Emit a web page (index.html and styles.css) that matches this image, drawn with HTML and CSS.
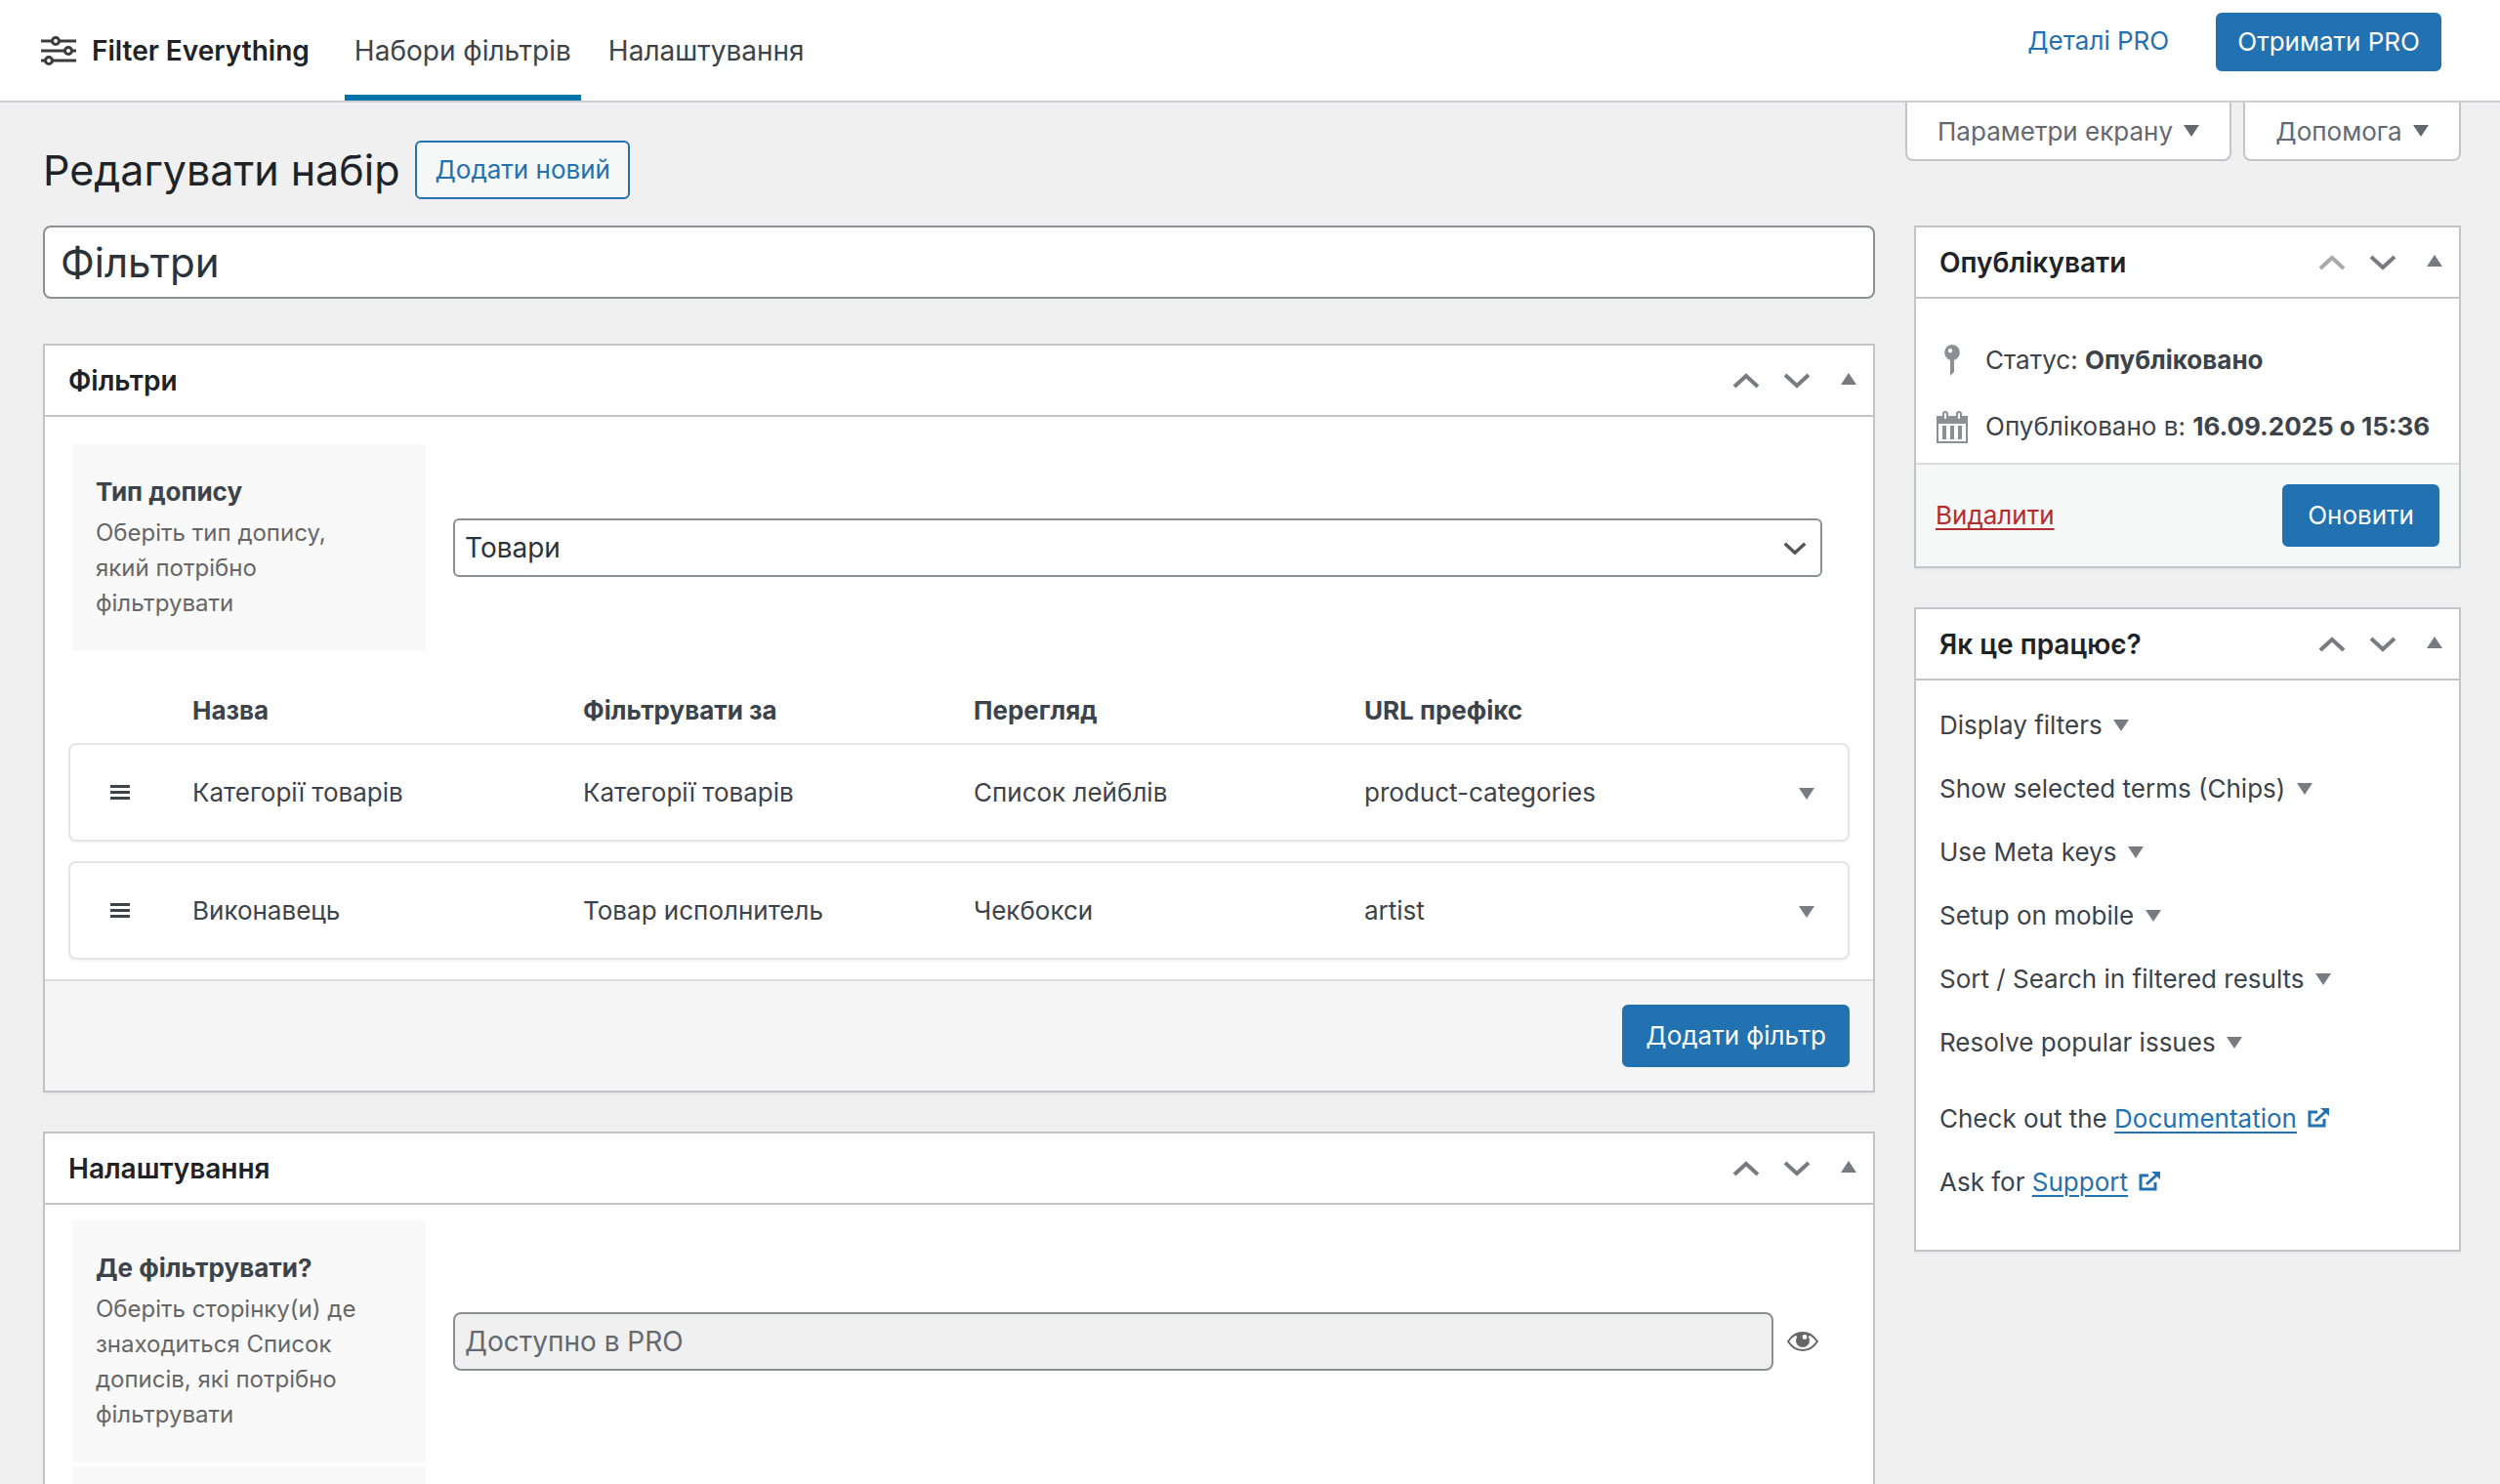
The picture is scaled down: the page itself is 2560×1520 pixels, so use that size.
FILE: index.html
```html
<!DOCTYPE html>
<html lang="uk">
<head>
  <meta charset="UTF-8">
  <title>Редагувати набір</title>
  <link rel="stylesheet" href="styles.css">
</head>
<body>
  <!-- Shared icons -->
  <svg class="sprite" aria-hidden="true">
    <symbol id="icon-up" viewBox="0 0 28 16"><path d="M2 14 L14 3 L26 14" fill="none" stroke="currentColor" stroke-width="4"/></symbol>
    <symbol id="icon-down" viewBox="0 0 28 16"><path d="M2 2 L14 13 L26 2" fill="none" stroke="currentColor" stroke-width="4"/></symbol>
    <symbol id="icon-external" viewBox="0 0 22 20"><path d="M10 4H2V18H17V11M8 13L19 3" fill="none" stroke="currentColor" stroke-width="3"/><path d="M13 0H22V8Z" fill="currentColor"/></symbol>
  </svg>

  <header class="topbar">
    <div class="brand">
      <svg class="brand-icon" viewBox="0 0 36 30" fill="none" stroke="#3c3c3c" stroke-width="3">
        <path d="M0 5H11M19 5H36M0 15H24M32 15H36M0 25H4M12 25H36"/>
        <circle cx="15" cy="5" r="3.5"/><circle cx="28" cy="15" r="3.5"/><circle cx="8" cy="25" r="3.5"/>
      </svg>
      <span>Filter Everything</span>
    </div>
    <nav class="tabs">
      <a href="#" class="tab active">Набори фільтрів</a>
      <a href="#" class="tab">Налаштування</a>
    </nav>
    <div class="pro">
      <a href="#" class="pro-link">Деталі PRO</a>
      <button type="button" class="btn btn-primary">Отримати PRO</button>
    </div>
  </header>

  <div class="page-head">
    <div class="heading">
      <h1>Редагувати набір</h1>
      <button type="button" class="btn btn-outline">Додати новий</button>
    </div>
    <div class="screen-meta">
      <button type="button">Параметри екрану <i class="tri-down"></i></button>
      <button type="button">Допомога <i class="tri-down"></i></button>
    </div>
  </div>

  <div class="columns">
    <main>
      <input type="text" class="title-input" value="Фільтри" aria-label="Назва набору">

      <section class="postbox">
        <div class="postbox-header">
          <h2>Фільтри</h2>
          <div class="handles">
            <button type="button" aria-label="Вгору"><svg><use href="#icon-up"/></svg></button>
            <button type="button" aria-label="Вниз"><svg><use href="#icon-down"/></svg></button>
            <button type="button" class="toggle" aria-label="Згорнути"><i class="tri-up"></i></button>
          </div>
        </div>
        <div class="field field-first">
          <div class="field-label">
            <label for="postType">Тип допису</label>
            <p>Оберіть тип допису, який потрібно фільтрувати</p>
          </div>
          <div class="field-input">
            <div class="select-wrap">
              <select id="postType"><option>Товари</option></select>
              <svg class="select-arrow"><use href="#icon-down"/></svg>
            </div>
          </div>
        </div>
        <table class="filters">
          <thead>
            <tr>
              <th class="col-sort"></th>
              <th>Назва</th>
              <th>Фільтрувати за</th>
              <th>Перегляд</th>
              <th>URL префікс</th>
              <th class="col-toggle"></th>
            </tr>
          </thead>
          <tbody>
            <tr>
              <td><span class="grip"></span></td>
              <td>Категорії товарів</td>
              <td>Категорії товарів</td>
              <td>Список лейблів</td>
              <td>product-categories</td>
              <td><i class="tri-down"></i></td>
            </tr>
            <tr>
              <td><span class="grip"></span></td>
              <td>Виконавець</td>
              <td>Товар исполнитель</td>
              <td>Чекбокси</td>
              <td>artist</td>
              <td><i class="tri-down"></i></td>
            </tr>
          </tbody>
        </table>
        <div class="filters-footer">
          <button type="button" class="btn btn-primary btn-large">Додати фільтр</button>
        </div>
      </section>

      <section class="postbox">
        <div class="postbox-header">
          <h2>Налаштування</h2>
          <div class="handles">
            <button type="button" aria-label="Вгору"><svg><use href="#icon-up"/></svg></button>
            <button type="button" aria-label="Вниз"><svg><use href="#icon-down"/></svg></button>
            <button type="button" class="toggle" aria-label="Згорнути"><i class="tri-up"></i></button>
          </div>
        </div>
        <div class="settings">
          <div class="field">
            <div class="field-label">
              <label for="where">Де фільтрувати?</label>
              <p>Оберіть сторінку(и) де знаходиться Список дописів, які потрібно фільтрувати</p>
            </div>
            <div class="field-input">
              <input type="text" id="where" value="Доступно в PRO" disabled>
              <svg class="eye" viewBox="0 0 32 20">
                <path d="M1 10C5 4 10 1 16 1S27 4 31 10C27 16 22 19 16 19S5 16 1 10Z" fill="none" stroke="#666" stroke-width="2"/>
                <path d="M8 3Q16 -1 24 3L22 5H10Z" fill="#666"/>
                <circle cx="16" cy="9" r="7" fill="#666"/><circle cx="18" cy="5.500" r="2.400" fill="#fff"/>
              </svg>
            </div>
          </div>
          <div class="field">
            <div class="field-label"></div>
          </div>
        </div>
      </section>
    </main>

    <aside>
      <section class="postbox">
        <div class="postbox-header">
          <h2>Опублікувати</h2>
          <div class="handles">
            <button type="button" aria-label="Вгору" disabled><svg><use href="#icon-up"/></svg></button>
            <button type="button" aria-label="Вниз"><svg><use href="#icon-down"/></svg></button>
            <button type="button" class="toggle" aria-label="Згорнути"><i class="tri-up"></i></button>
          </div>
        </div>
        <div class="publish">
          <div class="publish-row">
            <svg viewBox="0 0 34 34" fill="#8c8f94">
              <path fill-rule="evenodd" d="M17 1a8 8 0 0 1 2 15.700V29l-4 4V16.700A8 8 0 0 1 17 1ZM15 5a2.200 2.200 0 1 0 0.100 0Z"/>
            </svg>
            <span>Статус: <b>Опубліковано</b></span>
          </div>
          <div class="publish-row">
            <svg viewBox="0 0 34 34">
              <path d="M1 6H33V34H1Z" fill="#8c8f94"/>
              <path d="M3 14H31V32H3Z" fill="#fff"/>
              <path d="M7 16h4v14h-4zM15 16h4v14h-4zM23 16h4v14h-4z" fill="#8c8f94"/>
              <rect x="8" y="2" width="4" height="8" rx="2" fill="#fff" stroke="#8c8f94" stroke-width="2"/>
              <rect x="22" y="2" width="4" height="8" rx="2" fill="#fff" stroke="#8c8f94" stroke-width="2"/>
            </svg>
            <span>Опубліковано в: <b>16.09.2025 о 15:36</b></span>
          </div>
        </div>
        <div class="publish-actions">
          <a href="#" class="delete">Видалити</a>
          <button type="button" class="btn btn-primary btn-large">Оновити</button>
        </div>
      </section>

      <section class="postbox">
        <div class="postbox-header">
          <h2>Як це працює?</h2>
          <div class="handles">
            <button type="button" aria-label="Вгору"><svg><use href="#icon-up"/></svg></button>
            <button type="button" aria-label="Вниз"><svg><use href="#icon-down"/></svg></button>
            <button type="button" class="toggle" aria-label="Згорнути"><i class="tri-up"></i></button>
          </div>
        </div>
        <div class="help">
          <ul>
            <li>Display filters <i class="tri-down"></i></li>
            <li>Show selected terms (Chips) <i class="tri-down"></i></li>
            <li>Use Meta keys <i class="tri-down"></i></li>
            <li>Setup on mobile <i class="tri-down"></i></li>
            <li>Sort / Search in filtered results <i class="tri-down"></i></li>
            <li>Resolve popular issues <i class="tri-down"></i></li>
          </ul>
          <p>Check out the <a href="#">Documentation</a><svg><use href="#icon-external"/></svg></p>
          <p>Ask for <a href="#">Support</a><svg><use href="#icon-external"/></svg></p>
        </div>
      </section>
    </aside>
  </div>
</body>
</html>
```
FILE: styles.css
```css
/* Global Styles */
* {
  box-sizing: border-box;
}

body {
  margin: 0;
  height: 100vh;
  overflow: hidden;
  background: #f0f0f1;
  color: #3c434a;
  font-family: Inter, "Open Sans", sans-serif;
  font-size: 26px;
  line-height: 36px;
}

h1, h2, p, ul {
  margin: 0;
  padding: 0;
}

button, input, select {
  font: inherit;
  color: inherit;
}

button {
  cursor: pointer;
}

a {
  color: #2271b1;
}

b {
  font-weight: 700;
}

.sprite {
  display: none;
}

/* Triangles */
.tri-down, .tri-up {
  display: inline-block;
  border: 8px solid transparent;
  color: #787c82;
}

.tri-down {
  border-top: 12px solid;
  border-bottom: 0;
}

.tri-up {
  border-bottom: 12px solid;
  border-top: 0;
}

/* Buttons */
.btn {
  height: 60px;
  padding: 0 20px;
  border: 2px solid #2271b1;
  border-radius: 6px;
  white-space: nowrap;
}

.btn-primary {
  background: #2271b1;
  color: #fff;
}

.btn-outline {
  background: #f6f7f7;
  color: #2271b1;
}

.btn-large {
  height: 64px;
  padding: 0 24px;
}

/* Top bar */
.topbar {
  display: flex;
  height: 105px;
  padding: 0 60px 0 42px;
  border-bottom: 2px solid #ccd0d4;
  background: #fff;
}

.brand {
  display: flex;
  align-items: center;
  gap: 16px;
  margin-right: 36px;
  color: #1d2327;
  font-size: 28px;
  font-weight: 600;
}

.brand-icon {
  width: 36px;
  height: 30px;
}

.tabs {
  display: flex;
  gap: 18px;
  font-size: 28px;
}

.tab {
  display: flex;
  align-items: center;
  padding: 6px 10px 0;
  border-bottom: 6px solid transparent;
  color: #3c434a;
  text-decoration: none;
}

.tab.active {
  border-color: #0073aa;
}

.pro {
  display: flex;
  align-items: flex-start;
  gap: 48px;
  margin-left: auto;
  padding-top: 13px;
}

.pro-link {
  line-height: 58px;
  text-decoration: none;
}

/* Page heading */
.page-head {
  display: flex;
  align-items: flex-start;
  justify-content: space-between;
  height: 126px;
  padding: 0 40px 0 44px;
}

.heading {
  display: flex;
  align-items: center;
  gap: 16px;
  padding-top: 39px;
}

.heading .btn {
  padding: 0 18px;
}

h1 {
  color: #1d2327;
  font-size: 43px;
  font-weight: 400;
  line-height: 60px;
}

.screen-meta {
  display: flex;
  gap: 12px;
}

.screen-meta button {
  height: 60px;
  padding: 2px 31px 0;
  border: 2px solid #c3c4c7;
  border-top: 0;
  border-radius: 0 0 8px 8px;
  background: #fff;
  color: #646970;
}

.screen-meta i {
  margin: 0 0 4px 4px;
  color: #646970;
}

/* Columns */
.columns {
  display: grid;
  grid-template-columns: minmax(0, 1fr) 560px;
  gap: 40px;
  padding: 0 40px 0 44px;
}

.title-input {
  display: block;
  width: 100%;
  height: 75px;
  margin-bottom: 46px;
  padding: 0 16px;
  border: 2px solid #8c8f94;
  border-radius: 8px;
  background: #fff;
  color: #2c3338;
  font-size: 42px;
}

/* Postbox */
.postbox {
  margin-bottom: 40px;
  border: 2px solid #c3c4c7;
  background: #fff;
  box-shadow: 0 2px 2px rgba(0, 0, 0, 0.04);
}

.postbox-header {
  display: flex;
  align-items: center;
  justify-content: space-between;
  height: 73px;
  padding: 0 17px 0 24px;
  border-bottom: 2px solid #c3c4c7;
}

h2 {
  color: #1d2327;
  font-size: 28px;
  font-weight: 600;
}

.handles {
  display: flex;
  align-items: center;
  gap: 24px;
}

.handles button {
  display: flex;
  padding: 0;
  border: 0;
  background: none;
  color: #787c82;
}

.handles button:disabled {
  color: #a7aaad;
}

.handles .toggle {
  padding: 0 0 4px 7px;
}

.handles svg {
  width: 28px;
  height: 16px;
}

/* Fields */
.field {
  display: flex;
  gap: 28px;
  padding: 0 52px 0 28px;
}

.field-first {
  padding-top: 28px;
}

.field-label {
  width: 362px;
  padding: 31px 56px 31px 24px;
  background: #f9f9f9;
}

.field-label label {
  display: block;
  margin-bottom: 6px;
  font-weight: 700;
}

.field-label p {
  color: #666;
  font-size: 24px;
}

.field-input {
  display: flex;
  flex: 1;
  align-items: center;
  gap: 14px;
}

.select-wrap {
  position: relative;
  flex: 1;
}

.select-wrap select,
.field-input input {
  width: 100%;
  height: 60px;
  padding: 0 10px;
  border: 2px solid #8c8f94;
  border-radius: 6px;
  background: #fff;
  color: #2c3338;
  font-size: 28px;
}

.select-wrap select {
  display: block;
  appearance: none;
}

.select-arrow {
  position: absolute;
  top: 24px;
  right: 16px;
  width: 24px;
  height: 14px;
  color: #555;
  pointer-events: none;
}

.field-input input {
  flex: 1;
  border-radius: 8px;
}

.field-input input:disabled {
  background: #f0f0f0;
  color: #646970;
}

.eye {
  width: 32px;
  height: 20px;
  margin-right: 4px;
}

.settings {
  display: flex;
  flex-direction: column;
  gap: 4px;
  padding-top: 16px;
}

.settings .field {
  min-height: 246px;
}

/* Filters table */
.filters {
  width: calc(100% - 48px);
  margin: 28px 24px 0;
  table-layout: fixed;
  border-collapse: separate;
  border-spacing: 0 20px;
}

.filters th {
  padding: 0;
  font-weight: 700;
  line-height: 26px;
  text-align: left;
}

.filters .col-sort {
  width: 127px;
}

.filters .col-toggle {
  width: 97px;
}

.filters tbody tr {
  border-radius: 8px;
  box-shadow: 0 2px 2px rgba(0, 0, 0, 0.04);
}

.filters td {
  height: 101px;
  padding: 0;
  border: 2px solid #e2e4e7;
  border-width: 2px 0;
}

.filters td:first-child {
  padding-left: 41px;
  border-left-width: 2px;
  border-radius: 8px 0 0 8px;
}

.filters td:last-child {
  padding-right: 34px;
  border-right-width: 2px;
  border-radius: 0 8px 8px 0;
  text-align: right;
}

.filters td i {
  vertical-align: middle;
}

.grip {
  display: block;
  width: 20px;
  height: 15px;
  background: repeating-linear-gradient(#3c434a 0 3px, transparent 3px 6px);
}

.filters-footer {
  display: flex;
  justify-content: flex-end;
  padding: 24px;
  border-top: 2px solid #dcdcde;
  background: #f5f5f5;
}

.filters-footer .btn {
  padding: 0 22px;
}

/* Publish box */
.publish {
  padding: 29px 20px 3px;
}

.publish-row {
  display: flex;
  align-items: center;
  gap: 17px;
  height: 68px;
  white-space: nowrap;
}

.publish-row svg {
  width: 34px;
  height: 34px;
}

.publish-actions {
  display: flex;
  align-items: center;
  justify-content: space-between;
  padding: 20px;
  border-top: 2px solid #dcdcde;
  background: #f6f7f7;
}

.publish-actions .delete {
  color: #b32d2e;
}

.publish-actions a,
.help a {
  text-decoration-thickness: 2px;
  text-underline-offset: 4px;
}

/* Help box */
.help {
  padding: 13px 24px 37px;
}

.help ul {
  margin-bottom: 13px;
  list-style: none;
}

.help li,
.help p {
  height: 65px;
  line-height: 65px;
}

.help li i {
  margin: 0 0 3px 4px;
}

.help svg {
  width: 22px;
  height: 20px;
  margin-left: 11px;
  color: #2271b1;
}
```
